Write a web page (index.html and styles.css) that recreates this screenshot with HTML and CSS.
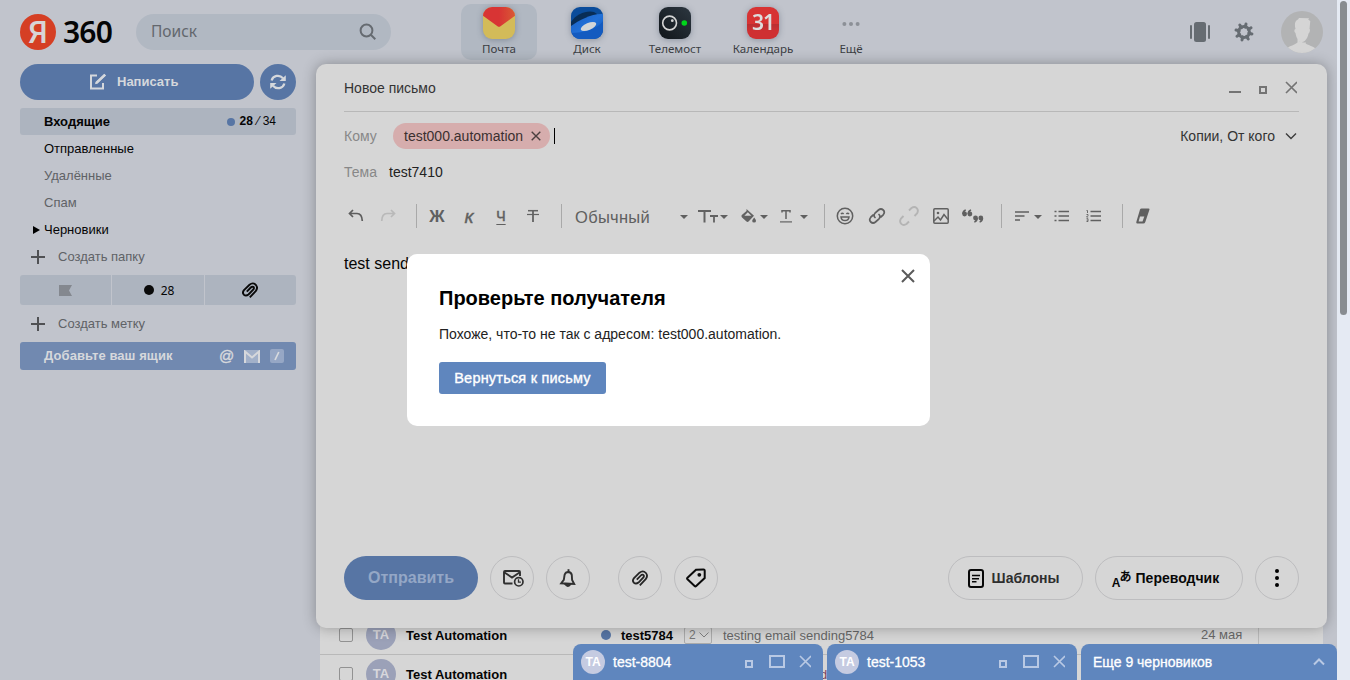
FILE: index.html
```
<!DOCTYPE html>
<html lang="ru">
<head>
<meta charset="utf-8">
<title>Новое письмо</title>
<link rel="stylesheet" href="styles.css">
</head>
<body>
<div class="page">
  <div class="app">
    <header class="header">
      <div class="logo"><span class="logo-mark">Я</span><span class="logo-name">360</span></div>
      <div class="search"><span>Поиск</span>
        <svg width="18" height="18" viewBox="0 0 18 18" fill="none" stroke="#666b71" stroke-width="2"><circle cx="7.5" cy="7.5" r="5.9"/><path d="M11.8 11.8l4.5 4.4"/></svg>
      </div>
      <nav class="services">
        <div class="service active">
          <svg class="app-icon" width="32" height="32" viewBox="0 0 32 32"><defs><clipPath id="rr"><rect width="32" height="32" rx="9"/></clipPath><linearGradient id="mg" x1="0" x2="1"><stop offset=".5" stop-color="#d83434"/><stop offset="1" stop-color="#d95b35"/></linearGradient></defs><g clip-path="url(#rr)"><rect width="32" height="32" fill="#d3bb59"/><path d="M-1 8V-1H33V8L17.5 19.2q-1.5 1.2-3 0z" fill="url(#mg)"/></g></svg>
          <span>Почта</span></div>
        <div class="service">
          <svg class="app-icon" width="32" height="32" viewBox="0 0 32 32"><defs><linearGradient id="dg" x1="0" y1="0" x2="1" y2="1"><stop stop-color="#1a5fc2"/><stop offset=".5" stop-color="#2271d9"/><stop offset="1" stop-color="#0d56b8"/></linearGradient></defs><g clip-path="url(#rr)"><rect width="32" height="32" fill="#0a4c9b"/><path d="M0 15C5 7 16 3 23 5l3 2-4 8-22 8z" fill="#082d56"/><path d="M0 19C8 13 22 6 32 7V24L22 32H7L0 25z" fill="url(#dg)"/><path d="M0 26C12 26 27 22 32 14V32H0z" fill="#145bc0"/><ellipse cx="17.5" cy="19.5" rx="8.3" ry="3.5" transform="rotate(-23 17.5 19.5)" fill="#d3d6d8"/></g></svg>
          <span>Диск</span></div>
        <div class="service">
          <svg class="app-icon" width="32" height="32" viewBox="0 0 32 32"><defs><linearGradient id="tg" x1="1" y1="0" x2="0" y2="1"><stop stop-color="#2d3740"/><stop offset="1" stop-color="#10151a"/></linearGradient></defs><rect width="32" height="32" rx="9" fill="url(#tg)"/><circle cx="10.6" cy="16" r="6.9" fill="none" stroke="#d5d5d5" stroke-width="1.6"/><circle cx="13.3" cy="13.7" r="1.4" fill="#d5d5d5"/><circle cx="25.3" cy="16" r="2.8" fill="#00d51b"/></svg>
          <span>Телемост</span></div>
        <div class="service">
          <div class="app-icon calendar">31</div>
          <span>Календарь</span></div>
        <div class="service">
          <svg width="32" height="32" viewBox="0 0 32 32" fill="#8c9097"><circle cx="9.4" cy="17" r="2"/><circle cx="16" cy="17" r="2"/><circle cx="22.6" cy="17" r="2"/></svg>
          <span>Ещё</span></div>
      </nav>
      <div class="account">
        <svg width="20" height="20" viewBox="0 0 20 20" fill="#666c72"><rect x="4" width="12" height="20" rx="2.5"/><rect y="3" width="2" height="14" rx="1"/><rect x="18" y="3" width="2" height="14" rx="1"/></svg>
        <svg width="20" height="20" viewBox="-10 -10 20 20"><g stroke="#666c72" stroke-width="3" stroke-linecap="round"><path d="M0-8.2V-5M0 5v3.2" transform="rotate(14)"/><path d="M0-8.2V-5M0 5v3.2" transform="rotate(59)"/><path d="M0-8.2V-5M0 5v3.2" transform="rotate(104)"/><path d="M0-8.2V-5M0 5v3.2" transform="rotate(149)"/></g><circle r="5.4" fill="none" stroke="#666c72" stroke-width="3"/></svg>
        <svg class="user" width="42" height="42" viewBox="0 0 42 42"><defs><clipPath id="uc"><circle cx="21" cy="21" r="21"/></clipPath></defs><g clip-path="url(#uc)"><rect width="42" height="42" fill="#b2b3b4"/><path d="M14.500 18c-1.300-5-.5-8.500 2.500-9.500l1-1.500 10 .3-.7 1.500 2 1.200-.8 8c1 .2.3 4-1 4.500-.5 3-1.500 5-3 6.500l.2 3.500c3 2 7 2.500 11 6v5H5V38c4-3.500 9-4 11.500-6.500V28c-1-1.500-1.500-3-2-6-1.500-.5-1.500-4 0-4z" fill="#d5d5d5"/><path d="M17 29.500q4 3.500 8-.5l.2 2q-4.500 1.500-8.200-1.500" fill="#b2b3b4"/></g></svg>
      </div>
    </header>

    <aside class="sidebar">
      <div class="actions">
        <div class="write"><svg width="18" height="18" viewBox="0 0 18 18" fill="none" stroke="#d5d8dc" stroke-width="2"><path d="M8 2.500H2V15.500H14V10"/><path d="M5.800 11.200L7 9 15.500 1 17 2.500 8.500 10.500z" fill="#d5d8dc" stroke="none"/><path d="M7 10.200L16 1.700" stroke-width="2.300"/></svg><span>Написать</span></div>
        <div class="refresh"><svg width="18" height="16" viewBox="0 0 18 16" fill="none" stroke="#d5d8dc" stroke-width="2.200"><path d="M2.600 6.500C4 1.400 10.500.2 14 4.200M15.400 9.500C14 14.600 7.500 15.800 4 11.800"/><path d="M16.800 1.200V7H10.500zM1.200 14.800V9H7.500z" fill="#d5d8dc" stroke="none"/></svg></div>
      </div>
      <div class="folder current"><b>Входящие</b><span class="count"><i class="dot"></i><b>28</b> ⁄ 34</span></div>
      <div class="folder">Отправленные</div>
      <div class="folder muted">Удалённые</div>
      <div class="folder muted">Спам</div>
      <div class="folder nested"><svg width="7" height="8" viewBox="0 0 7 8"><path d="M0 0l7 4-7 4z" fill="#000"/></svg>Черновики</div>
      <div class="create"><svg width="14" height="14" viewBox="0 0 14 14" stroke="#505154" stroke-width="2"><path d="M7 0v14M0 7h14"/></svg><span>Создать папку</span></div>
      <div class="filters">
        <div><svg width="13" height="11" viewBox="0 0 13 11"><path d="M0 0H13L10 5.500 13 11H0z" fill="#84888f"/></svg></div>
        <div><i class="black-dot"></i><span>28</span></div>
        <div><svg width="16" height="16" viewBox="0 0 16 16" fill="none" stroke="#0a0a0a" stroke-width="1.900"><path d="M7.800 15.300L13.700 9.200Q16.300 5.800 13.900 3 11-.1 7.500 2.700L2 8.100Q-.1 10.700 1.900 12.700 4 14.500 6.500 12.500L11.400 7.400Q12.500 5.700 11.300 4.900 10 4.200 8.800 5.500L4.800 9.700"/></svg></div>
      </div>
      <div class="create tag"><svg width="14" height="14" viewBox="0 0 14 14" stroke="#505154" stroke-width="2"><path d="M7 0v14M0 7h14"/></svg><span>Создать метку</span></div>
      <div class="add-box"><b>Добавьте ваш ящик</b>
        <span class="at">@</span>
        <svg width="16" height="13" viewBox="0 0 16 13"><rect width="16" height="13" fill="#a1b0c9"/><path d="M1 13V1.500L8 7.500 15 1.500V13" fill="none" stroke="#d6d8dc" stroke-width="2"/></svg>
        <svg width="14" height="14" viewBox="0 0 14 14"><rect width="14" height="14" rx="2" fill="#96a7c5"/><path d="M5 11L8.800 3" stroke="#d8dade" stroke-width="1.700"/></svg>
      </div>
    </aside>

    <main class="mail-list">
      <div class="mail"><i class="check"></i><span class="ava">TA</span><b class="from">Test Automation</b><i class="dot big"></i><b class="subject">test5784</b><span class="thread">2<svg width="10" height="6" viewBox="0 0 10 6" fill="none" stroke="#7f7f7f"><path d="M.5.500l4.500 4.500 4.500-4.500"/></svg></span><span class="snippet">testing email sending5784</span><span class="date">24 мая</span></div>
      <div class="mail"><i class="check"></i><span class="ava">TA</span><b class="from">Test Automation</b><span class="snippet tail">d</span></div>
    </main>

    <section class="compose">
      <div class="compose-head"><span>Новое письмо</span>
        <svg width="68" height="14" viewBox="0 0 68 14" fill="none" stroke="#747474"><path d="M0 11H12" stroke-width="2"/><rect x="31" y="6" width="6" height="6" stroke-width="2"/><path d="M57 1l11 11M68 1L57 12" stroke-width="1.600"/></svg>
      </div>
      <div class="to-row"><span class="label">Кому</span><span class="chip">test000.automation<svg width="10" height="10" viewBox="0 0 10 10" stroke="#4b4040" stroke-width="1.400"><path d="M.7.700l8.600 8.600M9.300.700L.7 9.300"/></svg></span><i class="cursor"></i><span class="copies">Копии, От кого<svg width="12" height="8" viewBox="0 0 12 8" fill="none" stroke="#3c3c3c" stroke-width="1.400"><path d="M1 1.500l5 5 5-5"/></svg></span></div>
      <div class="subject-row"><span class="label">Тема</span><span>test7410</span></div>
      <div class="toolbar">
        <span class="tool"><svg width="16" height="14" viewBox="0 0 16 14" fill="none" stroke="#5d5d5d" stroke-width="1.700"><path d="M5 1L1.500 4.500 5 8M2 4.500H9q5 0 5.300 7.500"/></svg></span>
        <span class="tool"><svg width="16" height="14" viewBox="0 0 16 14" fill="none" stroke="#b9b9b9" stroke-width="1.700"><path d="M11 1l3.500 3.500L11 8M14 4.500H7q-5 0-5.300 7.500"/></svg></span>
        <i class="sep"></i>
        <span class="tool bold">Ж</span><span class="tool italic">К</span><span class="tool under">Ч</span>
        <span class="tool"><svg width="12" height="14" viewBox="0 0 12 14" stroke="#626262" fill="none"><path d="M1 1.700H11" stroke-width="1.500"/><path d="M0 5.500H12" stroke-width="1.200"/><path d="M6 1V13" stroke-width="1.800"/></svg></span>
        <i class="sep"></i>
        <span class="font-select"><span>Обычный</span><i class="caret"></i></span>
        <span class="tool menu"><svg width="20" height="14" viewBox="0 0 20 14" fill="none" stroke="#626262" stroke-width="2"><path d="M0 2H13M6.500 2V13.500"/><path d="M12 7h8M16 7V13.500" stroke-width="1.800"/></svg><i class="caret"></i></span>
        <span class="tool menu bucket"><svg width="15" height="14" viewBox="0 0 15 14"><path d="M5.500 0L13 6.800 7.800 12.300q-1.300 1.200-2.600 0L.8 8.200q-.8-1.200 0-2.200L5.500 2z" fill="#626262"/><path d="M3.300 6.800L6.800 3.300 10.300 6.800z" fill="#d6d6d6"/><path d="M13.200 8.500q1.800 2.300 1.800 3.200a1.900 1.900 0 0 1-3.800 0q0-.9 2-3.200z" fill="#626262"/></svg><i class="caret"></i></span>
        <span class="tool menu"><svg width="12" height="14" viewBox="0 0 12 14" fill="none" stroke="#626262"><path d="M2 3.500V1.700H10V3.500M6 1.700V10" stroke-width="1.500"/><path d="M0 12.900H12" stroke-width="1.200"/></svg><i class="caret wide"></i></span>
        <i class="sep"></i>
        <span class="tool"><svg width="18" height="18" viewBox="0 0 18 18" fill="none" stroke="#606060" stroke-width="1.500"><circle cx="9" cy="9" r="7.700"/><path d="M5 7q1.300-1.500 2.600 0M10.400 7q1.300-1.500 2.600 0M5 10H13q-.3 3.500-4 3.500T5 10z"/></svg></span>
        <span class="tool"><svg width="18" height="18" viewBox="0 0 18 18" fill="none" stroke="#606060" stroke-width="1.700" stroke-linecap="round"><path d="M7 10.500Q5 8.500 7 6.200L10.500 3q2.500-2 4.700 0t0 4.800L12.800 10"/><path d="M11 7.500q2 2 0 4.300L7.500 15q-2.500 2-4.700 0t0-4.800L5.200 8"/></svg></span>
        <span class="tool"><svg width="20" height="20" viewBox="0 0 20 20" fill="none" stroke="#b4b4b4" stroke-width="1.900"><path d="M10 4.500L12.500 2q3-2 5.200.2t.3 5.300L15.500 10M10 15.500L7.500 18q-3 2-5.200-.2T2 12.500L4.500 10"/></svg></span>
        <span class="tool"><svg width="16" height="16" viewBox="0 0 16 16" fill="none" stroke="#606060" stroke-width="1.500"><rect x=".8" y=".8" width="14.400" height="14.400" rx="1"/><path d="M1 13l4-4 2.500 3L11 6.500l4 5"/><circle cx="5" cy="5" r="1.300" fill="#606060" stroke="none"/></svg></span>
        <span class="tool"><svg width="22" height="14" viewBox="0 0 22 14" fill="#606060"><g id="q"><circle cx="2.600" cy="5" r="2.400"/><path d="M.2 5Q0 1.500 3.500.2l.5 1.200Q2 2.500 2.500 5z"/><circle cx="7.900" cy="5" r="2.400"/><path d="M5.500 5Q5.300 1.500 8.800.2l.5 1.200Q7.300 2.500 7.800 5z"/></g><use href="#q" transform="rotate(180 10.700 7)"/></svg></span>
        <i class="sep"></i>
        <span class="tool menu align"><svg width="14" height="10" viewBox="0 0 14 10" stroke="#606060" stroke-width="1.600"><path d="M0 1H14M0 5H9.500M0 9H5"/></svg><i class="caret wide"></i></span>
        <span class="tool lists"><svg width="16" height="12" viewBox="0 0 16 12" stroke="#606060" stroke-width="1.700"><path d="M4.500 1.500H15M4.500 6H15M4.500 10.500H15M.5 1.500H2.500M.5 6H2.500M.5 10.500H2.500"/></svg></span>
        <span class="tool lists"><svg width="16" height="12" viewBox="0 0 16 12" fill="none" stroke="#606060" stroke-width="1.700"><path d="M4.500 1.500H15M4.500 6H15M4.500 10.500H15"/><path d="M.5.500h1V3M.5 4.500H2v1L.5 7h1.700M.5 8.700H2v2.800H.5M.700 10.200h1" stroke-width=".9"/></svg></span>
        <i class="sep"></i>
        <span class="tool"><svg width="14" height="16" viewBox="0 0 14 16"><path d="M5.500.5H12.500q1.200 0 1 1L9.300 14q-.5 1.500-2 1.500H1Q0 15.300.3 14L4 1.500Q4.500.5 5.500.5z" fill="#606060"/><path d="M4 8.500H8.300L6.500 13.500H2.600z" fill="#d6d6d6"/></svg></span>
      </div>
      <div class="body-text">test sending</div>
      <div class="compose-foot">
        <div class="send">Отправить</div>
        <div class="round mailtime"><svg width="22" height="18" viewBox="0 0 22 18" fill="none" stroke="#303030" stroke-width="1.900"><path d="M10.500 14.500H3Q2 14.500 2 13.500V3Q2 2 3 2H17Q18 2 18 3V7M2.500 3.500L10 8.500 17.500 3.500"/><circle cx="16.800" cy="12.800" r="4.200" stroke-width="1.700"/><path d="M16.500 10.300v2.800h2.400" stroke-width="1.300"/></svg></div>
        <div class="round bell"><svg width="18" height="20" viewBox="0 0 18 20" fill="none" stroke="#303030" stroke-width="1.900"><path d="M2.200 15.300L4.800 11.800 5.600 6.800Q6.500 4 9.300 4q3 .2 3.500 3l.3 5L15.200 16z"/><path d="M9.500 4.500V1.200"/><path d="M6.300 16.300q2.500 3.500 4.900.2z" fill="#303030"/></svg></div>
        <div class="round clip"><svg width="16" height="16" viewBox="0 0 16 16" fill="none" stroke="#252525" stroke-width="1.800"><path d="M7.800 15.300L13.700 9.200Q16.300 5.800 13.900 3 11-.1 7.500 2.700L2 8.100Q-.1 10.700 1.900 12.700 4 14.500 6.500 12.500L11.400 7.400Q12.500 5.700 11.300 4.900 10 4.200 8.800 5.500L4.800 9.700"/></svg></div>
        <div class="round label-btn"><svg width="20" height="20" viewBox="0 0 20 20" fill="none" stroke="#0b0b0b" stroke-width="2"><path d="M10 1.700l7.500-.3q1.200 0 1.200 1.200v7.400L10.200 18q-.8.700-1.600 0L1.500 11.300q-.8-.8 0-1.600z"/><circle cx="13.300" cy="6.800" r="1.900" fill="#0b0b0b" stroke="none"/></svg></div>
        <div class="pill templates"><svg width="16" height="19" viewBox="0 0 16 19" fill="none" stroke="#080808"><rect x="1" y="1" width="14" height="17" rx="2" stroke-width="2"/><path d="M4 6.500H12M4 9.700H11M4 12.800H8.500" stroke-width="1.500"/></svg><span>Шаблоны</span></div>
        <div class="pill translate"><span class="tr-icon"><b>A</b><i>あ</i></span><span>Переводчик</span></div>
        <div class="round more"><svg width="4" height="18" viewBox="0 0 4 18"><circle cx="2" cy="2" r="2"/><circle cx="2" cy="9" r="2"/><circle cx="2" cy="16" r="2"/></svg></div>
      </div>
    </section>

    <div class="dock">
      <div class="draft"><span class="mini">TA</span><span>test-8804</span><svg width="66" height="14" viewBox="0 0 66 14" fill="none" stroke="#b9c9e4"><rect x="1" y="6" width="6" height="6" stroke-width="2"/><rect x="25" y="1" width="14" height="11" stroke-width="2"/><path d="M55 1l11 11M66 1L55 12" stroke-width="1.600"/></svg></div>
      <div class="draft"><span class="mini">TA</span><span>test-1053</span><svg width="66" height="14" viewBox="0 0 66 14" fill="none" stroke="#b9c9e4"><rect x="1" y="6" width="6" height="6" stroke-width="2"/><rect x="25" y="1" width="14" height="11" stroke-width="2"/><path d="M55 1l11 11M66 1L55 12" stroke-width="1.600"/></svg></div>
      <div class="draft rest"><span>Еще 9 черновиков</span><svg width="12" height="8" viewBox="0 0 12 8" fill="none" stroke="#b9c9e4" stroke-width="2"><path d="M1 6.500l5-5 5 5"/></svg></div>
    </div>

    <div class="dialog">
      <svg class="close" width="14" height="14" viewBox="0 0 14 14" stroke="#5a5a5a" stroke-width="2"><path d="M1 1l12 12M13 1L1 13"/></svg>
      <h1>Проверьте получателя</h1>
      <p>Похоже, что-то не так с адресом: test000.automation.</p>
      <button>Вернуться к письму</button>
    </div>
  </div>
  <div class="scroll"><i></i></div>
</div>
</body>
</html>
```
FILE: styles.css
```
* { box-sizing: border-box; }
body { margin: 0; font-family: "Liberation Sans", Arial, sans-serif; font-size: 13px; color: #050505; }
i { font-style: normal; }
svg { display: block; flex: none; }
.page { width: 1350px; height: 680px; display: flex; overflow: hidden; background: #c1c4cc; white-space: nowrap; }
.app { position: relative; width: 1337px; height: 680px; overflow: hidden; }
.scroll { width: 13px; background: #e5eaf3; padding: 1px 3px; }
.scroll i { display: block; width: 7px; height: 314px; border-radius: 4px; background: #888c90; }

.header { height: 64px; display: flex; align-items: flex-start; font-family: "Noto Sans", sans-serif; }
.logo { display: flex; align-items: center; margin: 14px 0 0 20px; width: 116px; height: 36px; }
.logo-mark { width: 36px; height: 36px; border-radius: 50%; background: #d53f24; color: #d8d5d6; font: 500 31px/37px Roboto, sans-serif; text-align: center; }
.logo-name { margin-left: 7px; font-size: 30px; font-weight: 600; line-height: 36px; letter-spacing: -.8px; }
.search { width: 255px; height: 36px; margin-top: 14px; border-radius: 18px; background: #b1b8c2; color: #63676d; display: flex; align-items: center; justify-content: space-between; padding: 0 14px 0 15px; font-size: 15.5px; }
.search span { padding-bottom: 2px; }
.services { display: flex; gap: 12px; margin: 4px 0 0 70px; }
.service { width: 76px; height: 56px; border-radius: 10px; display: flex; flex-direction: column; align-items: center; padding-top: 3px; font-size: 11.6px; line-height: 14px; color: #3b3e43; }
.service span { margin-top: 3px; }
.service.active { background: #b1b8c2; }
.app-icon { filter: drop-shadow(0 1px 3px rgba(20, 35, 60, .3)); }
.calendar { width: 32px; height: 32px; border-radius: 9px; background: linear-gradient(#d73333 53%, #b92e31 53%, #cf3032 75%); color: #ddd; font-size: 21px; font-weight: 600; line-height: 31px; text-align: center; letter-spacing: -1px; }
.account { display: flex; align-items: center; margin: 11px 0 0 301px; height: 42px; }
.account svg + svg { margin-left: 24px; }
.account .user { margin-left: 27px; }

.sidebar { width: 276px; margin-left: 20px; }
.actions { display: flex; gap: 6px; height: 44px; }
.write { width: 234px; height: 36px; border-radius: 18px; background: #5775a4; color: #d5d8dc; font-weight: bold; display: flex; align-items: center; padding-left: 69px; gap: 10px; }
.write span { padding-bottom: 2px; }
.refresh { width: 36px; height: 36px; border-radius: 50%; background: #5775a4; display: flex; align-items: center; justify-content: center; }
.folder { height: 27px; padding: 0 20px 0 24px; line-height: 27px; display: flex; justify-content: space-between; border-radius: 3px; }
.folder.current { background: #adb4bf; }
.count { display: flex; align-items: center; font-size: 12px; gap: 1px; white-space: pre; }
.dot { width: 8px; height: 8px; border-radius: 50%; background: #5775a4; margin-right: 4px; }
.muted { color: #5f6266; }
.nested { justify-content: flex-start; align-items: center; padding-left: 13px; gap: 4px; }
.create { height: 32px; padding: 0 0 4px 11px; display: flex; align-items: center; gap: 13px; color: #5f6266; }
.create span { padding-bottom: 2px; }
.filters { display: grid; grid-template-columns: 91px 92px 91px; gap: 1px; height: 30px; border-radius: 3px; overflow: hidden; margin-bottom: 5px; }
.filters div { background: #adb4bf; display: flex; align-items: center; justify-content: center; gap: 7px; font: 12px "Noto Sans", sans-serif; }
.filters div:nth-child(2) { padding-left: 2px; }
.filters div:nth-child(3) { padding-right: 2px; }
.black-dot { width: 10px; height: 10px; border-radius: 50%; background: #0a0a0a; }
.add-box { height: 28px; border-radius: 3px; background: #7189b0; color: #d6d8dc; display: flex; align-items: center; padding: 0 12px 0 24px; gap: 10px; }
.add-box b { width: 166px; padding-bottom: 2px; letter-spacing: .08px; }
.at { font-size: 15px; -webkit-text-stroke: .4px #d6d8dc; width: 14px; margin-left: -1px; margin-right: 1px; padding-bottom: 1px; }

.mail-list { position: absolute; left: 320px; top: 616px; width: 1003px; background: #d6d6d6; }
.mail { height: 39px; display: flex; align-items: center; border-bottom: 1px solid #b9b9b9; padding-left: 19px; }
.check { width: 14px; height: 14px; border: 1px solid #929292; border-radius: 2px; }
.ava { width: 30px; height: 30px; margin-left: 13px; border-radius: 50%; background: #9ba1b8; color: #d7d7dc; text-align: center; line-height: 30px; font-weight: bold; }
.from { margin-left: 10px; width: 195px; }
.dot.big { width: 10px; height: 10px; margin-right: 10px; }
.subject { width: 63px; }
.thread { width: 28px; height: 17px; border: 1px solid #aaa; border-radius: 2px; color: #777; font-size: 12px; display: flex; align-items: center; gap: 3px; padding-left: 4px; }
.snippet { margin-left: 11px; color: #666; flex: 1; font-size: 13px; }
.tail { margin-left: 219px; color: #7b4260; }
.date { width: 122px; height: 38px; line-height: 38px; color: #686868; display: flex; justify-content: space-between; }
.date::after { content: ""; border-left: 1px solid #b9b9b9; margin-right: 64px; }

.compose { position: absolute; left: 316px; top: 64px; width: 1011px; height: 564px; border-radius: 10px; background: #d6d6d6; box-shadow: 0 0 14px rgba(0, 0, 0, .3); padding: 0 28px; }
.compose-head { height: 48px; border-bottom: 1px solid #b8b8b8; display: flex; align-items: center; justify-content: space-between; padding-right: 2px; font-size: 14px; color: #333; }
.to-row { height: 49px; padding-bottom: 1px; display: flex; align-items: center; font-size: 14px; }
.label { width: 49px; color: #888; }
.chip { height: 26px; border-radius: 13px; background: #d6adad; color: #3b3030; display: flex; align-items: center; gap: 8px; padding: 0 9px 0 11px; }
.cursor { width: 1px; height: 16px; background: #000; margin-left: 4px; }
.copies { margin-left: auto; padding-right: 2px; display: flex; align-items: center; gap: 10px; color: #333; }
.subject-row { height: 23px; padding-bottom: 2px; display: flex; align-items: center; font-size: 14px; color: #222; }
.subject-row .label { width: 45px; }
.toolbar { height: 64px; margin-left: -4px; display: flex; align-items: center; color: #606060; }
.tool { width: 32px; height: 24px; display: flex; align-items: center; justify-content: center; font-size: 15px; }
.bold { font-weight: bold; font-size: 17px; line-height: 22px; padding-top: 2px; }
.italic { font-style: italic; font-size: 15px; padding-top: 2px; -webkit-text-stroke: .6px #606060; }
.under { font-size: 14px; -webkit-text-stroke: .5px #606060; padding-bottom: 1px; text-decoration: underline; text-underline-offset: 3px; text-decoration-thickness: 1px; }
.sep { width: 1px; height: 24px; background: #a9a9a9; margin: 0 4px 0 12px; }
.sep + .font-select { margin-left: -4px; }
.font-select { width: 130px; padding: 0 4px 0 13px; display: flex; align-items: center; justify-content: space-between; font-size: 16.5px; line-height: 22px; padding-top: 1px; letter-spacing: .3px; }
.caret { border: 4px solid transparent; border-top-color: #606060; border-bottom: 0; margin-top: 1px; }
.menu { width: 40px; justify-content: space-between; padding: 0 4px 0 6px; }
.bucket { padding-left: 9px; }
.menu:has(.wide) { padding-left: 8px; }
.align:has(.wide) { padding-left: 9px; }
.lists { padding-right: 1px; }
.body-text { height: 42px; line-height: 32px; font-size: 16px; }
.compose-foot { position: absolute; left: 28px; right: 28px; bottom: 28px; height: 44px; display: flex; gap: 12px; }
.send { width: 134px; border-radius: 22px; background: #5775a4; color: #94a7c6; font-size: 16px; font-weight: bold; text-align: center; line-height: 43px; }
.round, .pill { height: 44px; border: 1px solid #bdbdbf; border-radius: 22px; display: flex; align-items: center; justify-content: center; }
.round { width: 44px; }
.mailtime { padding-left: 2px; }
.bell { padding-right: 1px; }
.label-btn { padding-right: 1px; }
.clip { margin-left: 16px; }
.pill { gap: 8px; font-size: 14px; font-weight: bold; color: #2e2e2e; }
.templates { width: 135px; margin-left: auto; padding-right: 4px; }
.translate { width: 148px; gap: 4px; color: #080808; padding-right: 7px; }
.tr-icon { display: flex; font-size: 12px; line-height: 12px; height: 20px; }
.tr-icon b { align-self: flex-end; margin-bottom: -1px; }
.tr-icon i { font-family: "Noto Sans CJK JP", sans-serif; font-size: 12px; line-height: 15px; margin-left: -1px; }

.dock { position: absolute; left: 573px; top: 644px; display: grid; grid-template-columns: 250px 250px 256px; gap: 4px; }
.draft { height: 40px; border-radius: 8px 8px 0 0; background: #5f86be; color: #fff; display: flex; align-items: center; padding: 0 12px 4px 8px; font-size: 14px; -webkit-text-stroke: .3px #fff; }
.draft svg { margin-left: auto; }
.mini { width: 24px; height: 24px; border-radius: 50%; background: #c5cbe1; margin-right: 8px; text-align: center; line-height: 24px; font-size: 12px; font-weight: bold; -webkit-text-stroke: 0; }
.rest { padding-left: 12px; }

.dialog { position: absolute; left: 407px; top: 254px; width: 523px; height: 172px; border-radius: 10px; background: #fff; padding: 32px; }
.close { position: absolute; right: 15px; top: 15px; }
h1 { margin: 0; font-size: 20px; line-height: 24px; color: #000; }
.dialog p { margin: 14px 0 17px; font-size: 14px; line-height: 21px; color: #222; }
.dialog button { display: block; width: 167px; height: 32px; border: 0; border-radius: 3px; padding: 0; background: #5f86be; color: #fff; font: 14.5px "Liberation Sans", Arial, sans-serif; -webkit-text-stroke: .35px #fff; letter-spacing: .2px; }
```
